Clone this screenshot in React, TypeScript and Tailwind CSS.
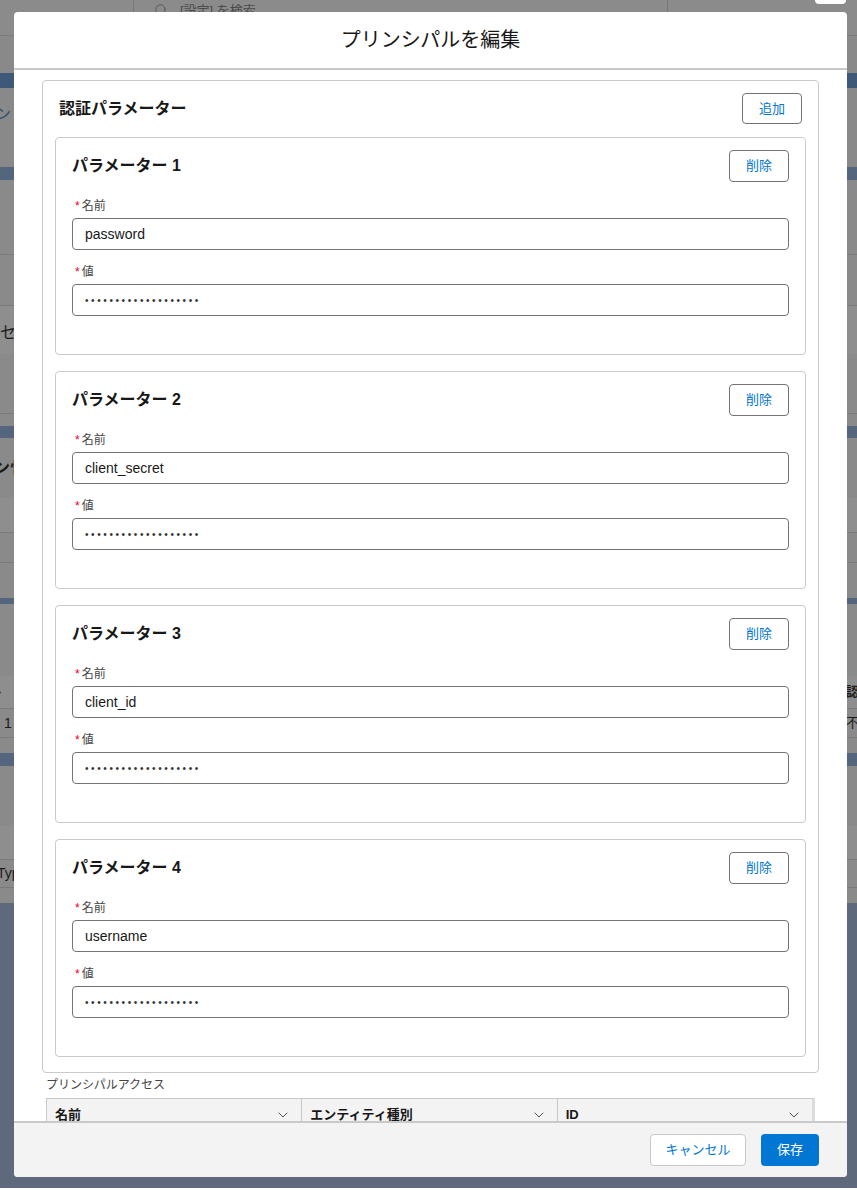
import { ChevronDown, Search } from 'lucide-react';

const params = ['password', 'client_secret', 'client_id', 'username'];

// backdrop stripes of the dimmed page behind the modal
const bands = [
  { h: 'h-[36px]', bg: 'bg-[#8b8b8b]', line: true },
  { h: 'h-[37px]', bg: 'bg-[#898989]' },
  { h: 'h-[15px]', bg: 'bg-[#3e5878]' },
  { h: 'h-[79px]', bg: 'bg-[#898989]', left: 'ン', leftCls: 'text-[#2e4f73] -ml-[4px] text-[15px] self-start mt-[15px]' },
  { h: 'h-[13px]', bg: 'bg-[#53667d]' },
  { h: 'h-[75px]', bg: 'bg-[#8a8a8a]', line: true },
  { h: 'h-[51px]', bg: 'bg-[#8a8a8a]', line: true },
  { h: 'h-[48px]', bg: 'bg-[#8e8e8e]', left: 'セ', leftCls: 'text-[#1b1b1b] text-[16px] mt-[6px]' },
  { h: 'h-[60px]', bg: 'bg-[#8a8a8a]', line: true },
  { h: 'h-[12px]', bg: 'bg-[#8a8a8a]' },
  { h: 'h-[12px]', bg: 'bg-[#53667d]' },
  { h: 'h-[60px]', bg: 'bg-[#8a8a8a]', left: 'ン忄', leftCls: 'text-[#1b1b1b] font-bold -ml-[6px] text-[16px]' },
  { h: 'h-[35px]', bg: 'bg-[#8e8e8e]', line: true },
  { h: 'h-[30px]', bg: 'bg-[#8a8a8a]', line: true },
  { h: 'h-[35px]', bg: 'bg-[#8a8a8a]' },
  { h: 'h-[6px]', bg: 'bg-[#53667d]' },
  { h: 'h-[72px]', bg: 'bg-[#8a8a8a]' },
  { h: 'h-[33px]', bg: 'bg-[#8e8e8e]', line: true, left: '›', leftCls: 'text-[#333] -ml-[3px] text-[13px]', right: '認', rightCls: 'text-[#1b1b1b] font-bold text-[13px]' },
  { h: 'h-[29px]', bg: 'bg-[#8a8a8a]', line: true, left: '1', leftCls: 'text-[#1b1b1b] ml-[4px] text-[14px]', right: '不', rightCls: 'text-[#1b1b1b] text-[13px]' },
  { h: 'h-[15px]', bg: 'bg-[#8a8a8a]' },
  { h: 'h-[13px]', bg: 'bg-[#53667d]' },
  { h: 'h-[60px]', bg: 'bg-[#8a8a8a]' },
  { h: 'h-[34px]', bg: 'bg-[#8e8e8e]', line: true },
  { h: 'h-[28px]', bg: 'bg-[#8a8a8a]', line: true, left: 'Typ', leftCls: 'text-[#1b1b1b] -ml-[3px] text-[14px]' },
  { h: 'h-[15px]', bg: 'bg-[#8a8a8a]' },
  { h: 'h-[285px]', bg: 'bg-[#5e6a7b]' },
];

function Field({ label, value, masked }: { label: string; value: string; masked?: boolean }) {
  return (
    <div>
      <div className="flex items-center h-[18px] text-[12px] leading-[18px] text-[#444]">
        <span className="text-[#ea001e] mr-[2px] ml-[3px]">*</span>
        {label}
      </div>
      <div className="mt-[3px] h-[32px] rounded-[4px] border border-[#747474] bg-white flex items-center px-[12px] text-[14px] text-[#181818]">
        {masked ? <span className="tracking-[2.6px] text-[10px] text-[#333]">{'•'.repeat(19)}</span> : value}
      </div>
    </div>
  );
}

function ParamCard({ index, name }: { index: number; name: string }) {
  return (
    <div className="rounded-[4px] border border-[#c9c9c9] bg-white px-[16px] pt-[12px] pb-[38px]">
      <div className="flex items-center justify-between h-[32px]">
        <h3 className="text-[16px] font-bold text-[#181818]">パラメーター {index}</h3>
        <button className="h-[32px] w-[60px] rounded-[4px] border border-[#747474] bg-white text-[13px] text-[#0176d3]">
          削除
        </button>
      </div>
      <div className="mt-[15px]">
        <Field label="名前" value={name} />
      </div>
      <div className="mt-[13px]">
        <Field label="値" value="" masked />
      </div>
    </div>
  );
}

export default function App() {
  return (
    <div className="relative h-[1190px] w-[857px] overflow-hidden font-['Liberation_Sans','Noto_Sans_CJK_JP',sans-serif]">
      {/* dimmed page */}
      <div className="flex flex-col">
        {bands.map((b, i) => (
          <div
            key={i}
            className={`${b.h} ${b.bg} ${b.line ? 'border-b border-[#7a7a7a]' : ''} flex items-center justify-between shrink-0`}
          >
            <span className={b.leftCls}>{b.left}</span>
            <span className={`${b.rightCls ?? ''} mr-[-2px]`}>{b.right}</span>
          </div>
        ))}
      </div>

      {/* top search bar remnants */}
      <div className="absolute left-[133px] top-0 h-[36px] w-[535px] border-x border-[#777] flex items-start pt-[1px] pl-[20px] gap-[12px] text-[13px] text-[#4a4a4a]">
        <Search size={14} strokeWidth={1.6} className="mt-[2px] text-[#555]" />
        <span>[設定] を検索</span>
      </div>
      <div className="absolute left-[815px] top-[-26px] h-[30px] w-[31px] rounded-[4px] bg-white" />

      {/* modal */}
      <div className="absolute left-[14px] top-[12px] w-[833px] rounded-[4px] bg-white overflow-hidden">
        <header className="h-[58px] border-b-2 border-[#c9c9c9] flex items-center justify-center">
          <h2 className="text-[20px] text-[#181818]">プリンシパルを編集</h2>
        </header>

        <div className="h-[1051px] overflow-hidden px-[28px] pt-[10px]">
          <section className="rounded-[4px] border border-[#c9c9c9] px-[12px] pt-[12px] pb-[15px]">
            <div className="flex items-center justify-between h-[31px] px-[4px]">
              <h2 className="text-[16px] font-bold text-[#181818]">認証パラメーター</h2>
              <button className="h-[31px] w-[60px] rounded-[4px] border border-[#747474] bg-white text-[13px] text-[#0176d3]">
                追加
              </button>
            </div>
            <div className="mt-[13px] flex flex-col gap-[16px]">
              {params.map((p, i) => (
                <ParamCard key={p} index={i + 1} name={p} />
              ))}
            </div>
          </section>

          <div className="mt-[4px] pl-[4px] text-[12px] leading-[16px] text-[#444]">プリンシパルアクセス</div>
          <div className="mt-[5px] mx-[4px] flex border border-[#c9c9c9] border-r-[3px] border-r-[#dcdcdc] bg-[#f3f3f3]">
            {['名前', 'エンティティ種別', 'ID'].map((c, i) => (
              <div
                key={c}
                className={`flex-1 h-[32px] flex items-center justify-between pl-[8px] pr-[10px] text-[13px] font-bold text-[#181818] ${i < 2 ? 'border-r border-[#c9c9c9]' : ''}`}
              >
                {c}
                <ChevronDown size={16} strokeWidth={1.5} className="text-[#555]" />
              </div>
            ))}
          </div>
        </div>

        <footer className="h-[56px] border-t-2 border-[#c9c9c9] bg-[#f3f3f3] flex items-center justify-end gap-[15px] pr-[28px]">
          <button className="h-[32px] w-[96px] rounded-[4px] border border-[#c9c9c9] bg-white text-[13px] text-[#0176d3]">
            キャンセル
          </button>
          <button className="h-[32px] w-[58px] rounded-[4px] bg-[#0176d3] text-[13px] text-white">保存</button>
        </footer>
      </div>
    </div>
  );
}
